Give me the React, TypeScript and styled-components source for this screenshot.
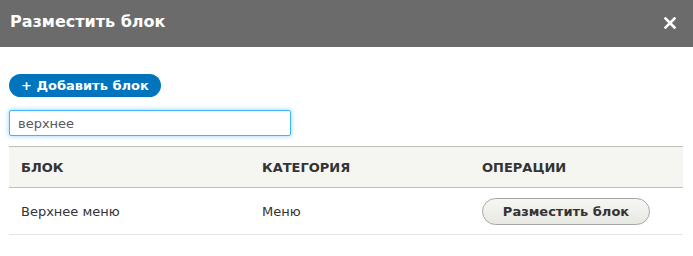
import React, { useState } from 'react'
import styled, { createGlobalStyle } from 'styled-components'

const GlobalStyle = createGlobalStyle`
  html, body {
    margin: 0;
    padding: 0;
    background: #fff;
    font-family: "DejaVu Sans", Verdana, sans-serif;
  }
`;

const rows = [{ block: 'Верхнее меню', category: 'Меню' }];

const App = () => {
  const [query, setQuery] = useState('верхнее');

  return (
    <>
      <GlobalStyle />
      <Dialog>
        <TitleBar>
          <Title>Разместить блок</Title>
          <CloseButton aria-label="Закрыть">
            <svg width="12" height="12" viewBox="0 0 12 12">
              <path d="M1.5 1.5 L10.5 10.5 M10.5 1.5 L1.5 10.5" stroke="#fff" strokeWidth="2.6" strokeLinecap="square" />
            </svg>
          </CloseButton>
        </TitleBar>
        <Content>
          <AddButton>+ Добавить блок</AddButton>
          <SearchInput value={query} onChange={(e) => setQuery(e.target.value)} />
          <Table>
            <colgroup>
              <col style={{ width: 241 }} />
              <col style={{ width: 220 }} />
              <col />
            </colgroup>
            <thead>
              <tr>
                <HeadCell>Блок</HeadCell>
                <HeadCell>Категория</HeadCell>
                <HeadCell>Операции</HeadCell>
              </tr>
            </thead>
            <tbody>
              {rows.map((r) => (
                <tr key={r.block}>
                  <Cell>{r.block}</Cell>
                  <Cell>{r.category}</Cell>
                  <Cell>
                    <PlaceButton>Разместить блок</PlaceButton>
                  </Cell>
                </tr>
              ))}
            </tbody>
          </Table>
        </Content>
      </Dialog>
    </>
  );
};

export default App;

const Dialog = styled.div`
  width: 693px;
  height: 256px;
  background: #fff;
  overflow: hidden;
`;

const TitleBar = styled.div`
  display: flex;
  align-items: center;
  justify-content: space-between;
  height: 47px;
  background: #6b6b6b;
  padding: 0 17px 4px 10px;
  box-sizing: border-box;
`;

const Title = styled.div`
  color: #fff;
  font-size: 16px;
  font-weight: bold;
`;

const CloseButton = styled.div`
  display: flex;
  width: 12px;
  height: 12px;
  margin-top: 2px;
`;

const Content = styled.div`
  display: flex;
  flex-direction: column;
  align-items: flex-start;
  padding: 27px 10px 0 9px;
`;

const AddButton = styled.div`
  display: flex;
  align-items: center;
  height: 23px;
  padding: 0 12px 0 12px;
  border-radius: 12px;
  background: #0074bd;
  color: #fff;
  font-size: 13px;
  font-weight: bold;
  box-sizing: border-box;
`;

const SearchInput = styled.input`
  margin-top: 13px;
  width: 282px;
  height: 26px;
  box-sizing: border-box;
  border: 1px solid #40b6ff;
  border-radius: 2px;
  box-shadow: 0 0 5px rgba(64, 182, 255, 0.6);
  padding: 0 8px;
  font-family: "DejaVu Sans", Verdana, sans-serif;
  font-size: 13px;
  color: #595959;
  outline: none;
`;

const Table = styled.table`
  margin-top: 10px;
  width: 674px;
  border-collapse: collapse;
  table-layout: fixed;
`;

const HeadCell = styled.th`
  height: 40px;
  padding: 0 12px;
  background: #f5f5f2;
  border-top: 1px solid #bfbfba;
  border-bottom: 1px solid #bfbfba;
  text-align: left;
  text-transform: uppercase;
  font-size: 13px;
  font-weight: bold;
  color: #333;
`;

const Cell = styled.td`
  height: 46px;
  padding: 0 12px;
  border-bottom: 1px solid #e6e4df;
  font-size: 13px;
  color: #333;
`;

const PlaceButton = styled.div`
  display: inline-flex;
  align-items: center;
  justify-content: center;
  width: 168px;
  height: 27px;
  box-sizing: border-box;
  border: 1px solid #a6a6a6;
  border-radius: 14px;
  background: linear-gradient(to bottom, #f6f6f3, #e8e8e3);
  color: #333;
  font-size: 13px;
  font-weight: bold;
`;
